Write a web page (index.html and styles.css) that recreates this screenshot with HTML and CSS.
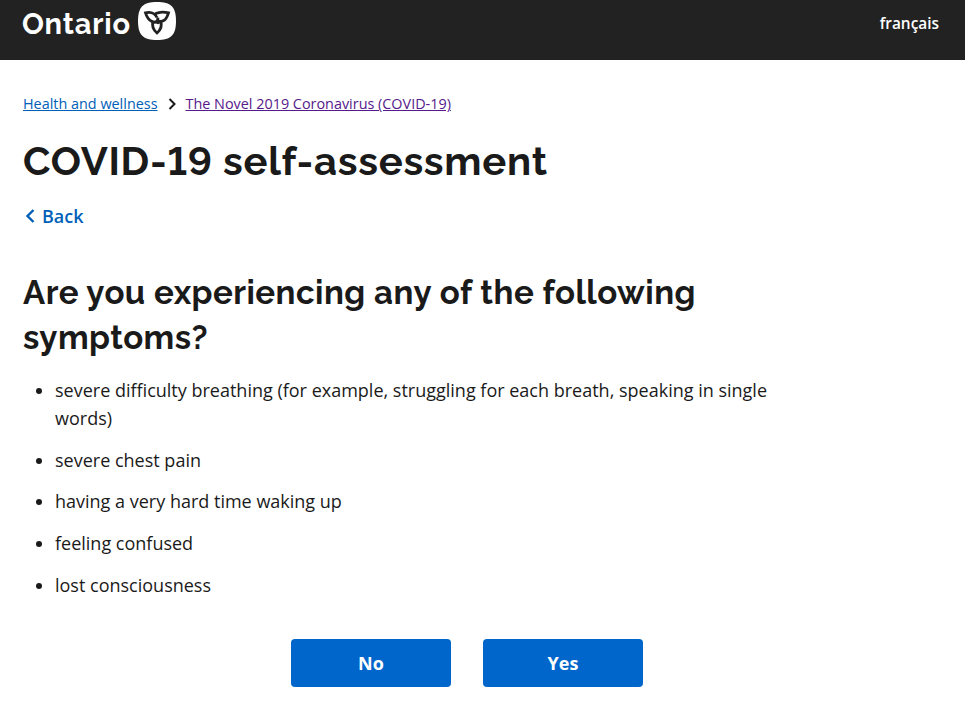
FILE: index.html
```
<!DOCTYPE html>
<html lang="en">
<head>
  <meta charset="utf-8">
  <title>COVID-19 self-assessment</title>
  <link rel="stylesheet" href="styles.css">
</head>
<body>
  <header class="header">
    <a class="logo" href="#">
      <span class="logo-text">Ontario</span>
      <svg class="logo-mark" viewBox="0 0 38 38" width="38" height="38">
        <path fill="#fff" d="M19 0C33 0 38 5 38 19S33 38 19 38 0 33 0 19 5 0 19 0z"/>
        <g fill="none" stroke="#222" stroke-width="2.800" stroke-linejoin="miter">
          <path d="M18.500 19.500C17 21 10.500 20.500 7.500 10.800C12 9.800 17 11 19 15.500"/>
          <path d="M16 13C18.500 10 25 9.500 30.500 10.800C28 19 24 20.500 19.500 18.500L20 15.500"/>
          <path d="M15 19C13.500 24 15 27.500 19 31C23 27.500 24.500 24 22.500 18.500M22 19.500C20.500 21.500 18.500 21 17.500 18.500"/>
        </g>
      </svg>
    </a>
    <a class="lang" href="#">français</a>
  </header>

  <main class="container">
    <nav class="breadcrumbs">
      <a href="#">Health and wellness</a>
      <svg class="chevron" viewBox="0 0 8 12" width="8" height="12"><path d="M1.500 1L6.500 6L1.500 11"/></svg>
      <a class="visited" href="#">The Novel 2019 Coronavirus (COVID-19)</a>
    </nav>

    <h1>COVID-19 self-assessment</h1>

    <a class="back" href="#">
      <svg class="chevron" viewBox="0 0 10 14" width="10" height="14"><path d="M8.500 1L2.500 7L8.500 13"/></svg>
      <span>Back</span>
    </a>

    <h2>Are you experiencing any of the following symptoms?</h2>

    <ul class="symptoms">
      <li>severe difficulty breathing (for example, struggling for each breath, speaking in single words)</li>
      <li>severe chest pain</li>
      <li>having a very hard time waking up</li>
      <li>feeling confused</li>
      <li>lost consciousness</li>
    </ul>

    <div class="buttons">
      <button type="button">No</button>
      <button type="button">Yes</button>
    </div>
  </main>
</body>
</html>
```
FILE: styles.css
```
body {
  margin: 0;
  background-color: #fff;
  color: #1a1a1a;
  font-family: "Open Sans", sans-serif;
  font-size: 18px;
}

.header {
  display: flex;
  justify-content: space-between;
  align-items: flex-start;
  box-sizing: border-box;
  height: 60px;
  padding: 2px 26px 0 22px;
  background-color: #222;
}

.logo {
  display: flex;
  gap: 8px;
  color: #fff;
  text-decoration: none;
}

.logo-text {
  width: 108px;
  font-family: Raleway, Lato, sans-serif;
  font-size: 29px;
  font-weight: 700;
  line-height: 44px;
  letter-spacing: 0.8px;
  white-space: nowrap;
}

.lang {
  color: #fff;
  font-size: 15.4px;
  font-weight: 600;
  line-height: 24px;
  margin-top: 10px;
  text-decoration: none;
}

.container {
  width: 754px;
  padding: 0 23px;
}

.breadcrumbs {
  display: flex;
  align-items: center;
  gap: 10px;
  padding-top: 33px;
  font-size: 14.4px;
  line-height: 22px;
}

.breadcrumbs a {
  color: #0060b8;
}

.breadcrumbs a.visited {
  color: #551a8b;
}

.chevron {
  fill: none;
  stroke: #1a1a1a;
  stroke-width: 2;
}

h1,
h2 {
  margin: 0;
  font-family: Raleway, Inter, sans-serif;
  font-weight: 700;
  font-variant-numeric: lining-nums;
}

h1 {
  margin-top: 22px;
  font-size: 40px;
  line-height: 48px;
  letter-spacing: 0.73px;
  white-space: nowrap;
}

.back {
  display: inline-flex;
  align-items: center;
  gap: 7px;
  margin: 17px 0 0 2px;
  color: #0060b8;
  font-weight: 600;
  line-height: 28px;
  text-decoration: none;
}

.back .chevron {
  stroke: #0060b8;
  stroke-width: 2.4;
}

h2 {
  margin-top: 40px;
  font-size: 33px;
  line-height: 45px;
  letter-spacing: 0.46px;
}

.symptoms {
  margin: 17px 0 0;
  padding-left: 32px;
  line-height: 27.8px;
}

.symptoms li {
  margin-bottom: 14px;
}

.buttons {
  display: flex;
  gap: 32px;
  margin: 39px 0 0 268px;
}

button {
  width: 160px;
  height: 48px;
  border: none;
  border-radius: 4px;
  background-color: #0066cc;
  color: #fff;
  font-family: inherit;
  font-size: 18px;
  font-weight: 700;
  cursor: pointer;
}
```
